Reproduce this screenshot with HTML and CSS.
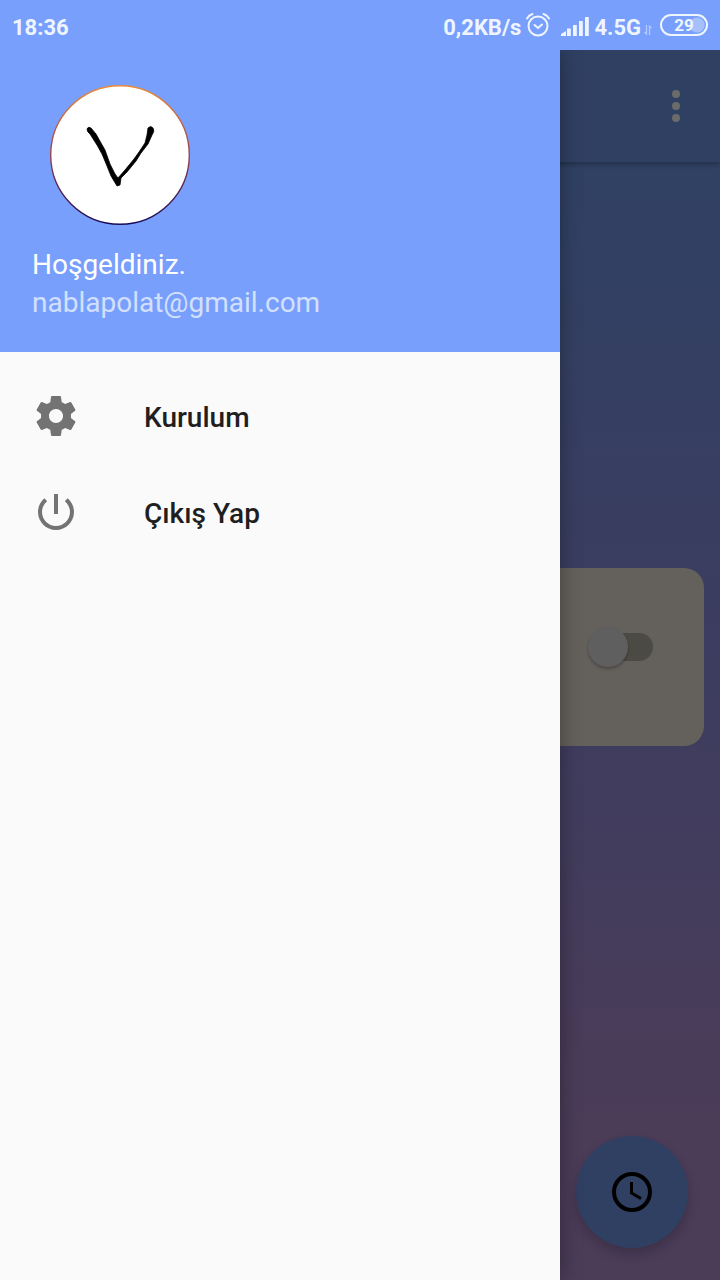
FILE: index.html
```html
<!DOCTYPE html>
<html lang="tr">
<head>
<meta charset="utf-8">
<meta name="viewport" content="width=device-width, initial-scale=1">
<title>Kurulum</title>
<link rel="stylesheet" href="styles.css">
</head>
<body>
<div class="status-bar">
  <span class="status-time">18:36</span>
  <div class="status-info">
    <span>0,2KB/s</span>
    <svg class="alarm" viewBox="0 0 26 26" width="26" height="26" fill="none" stroke="currentColor" stroke-width="2" stroke-linecap="round">
      <circle cx="13" cy="14" r="9.5"/>
      <path d="M9.5 13l3.5 3 4-3.500M2 6.500Q4 3 7.500 2M24 6.500Q22 3 18.500 2"/>
    </svg>
    <svg class="signal" viewBox="0 0 28 20" width="28" height="20" fill="currentColor">
      <path d="M0 20v-2l5-3v5zM6 12.500h3.800V20H6zM12 9h3.800v11H12zM18 5h3.800v15H18zM24 1h3.800v19H24z"/>
    </svg>
    <span class="network">4.5G</span>
    <svg class="traffic" viewBox="0 0 8 10" width="8" height="10" fill="none" stroke="currentColor" stroke-width="1.300">
      <path d="M2.500 0v9L.5 7M5.500 10V1l2 2"/>
    </svg>
    <span class="battery">29</span>
  </div>
</div>

<div class="screen">
  <header class="toolbar">
    <button class="more" type="button" aria-label="Diğer seçenekler">
      <svg viewBox="0 0 48 48" width="48" height="48" fill="currentColor"><circle cx="24" cy="12" r="4"/><circle cx="24" cy="24" r="4"/><circle cx="24" cy="36" r="4"/></svg>
    </button>
  </header>
  <main class="content">
    <section class="card">
      <input class="switch" type="checkbox" role="switch" aria-label="Aç / kapat">
    </section>
  </main>
  <button class="fab" type="button" aria-label="Zamanlayıcı">
    <svg viewBox="0 0 24 24" width="48" height="48" fill="none" stroke="currentColor">
      <circle cx="12" cy="12" r="9" stroke-width="2"/><path d="M11.750 7v5.500l4.750 2.800" stroke-width="1.500"/>
    </svg>
  </button>

  <aside class="drawer">
    <div class="profile">
      <svg class="avatar" viewBox="0 0 140 140" width="140" height="140">
        <defs><linearGradient id="ring" x1="0" y1="0" x2="0" y2="1"><stop offset="0" stop-color="#f08a32"/><stop offset=".5" stop-color="#964350"/><stop offset="1" stop-color="#180a55"/></linearGradient></defs>
        <circle cx="70" cy="70" r="69.300" fill="#fff" stroke="url(#ring)" stroke-width="1.400"/>
        <path d="M37 44Q38 41 41 43L46 49L51 58L55 65L60 79L65 89L68 93L75 85L84 74L89 67L95 58L97 50L98 43Q101 40 103 43Q105 46 102 50L98 59L91 68L86 76L77 87L71 93L70 100L67 101L61 91L57 81L52 69L47 60L40 49Q37 47 37 44z" fill="#000" stroke="#000" stroke-width=".8" stroke-linejoin="round"/>
      </svg>
      <div class="greeting">Hoşgeldiniz.</div>
      <div class="email">nablapolat@gmail.com</div>
    </div>
    <nav class="menu">
      <a class="menu-item" href="#kurulum">
        <svg viewBox="0 0 24 24" width="48" height="48" fill="currentColor"><path d="M19.430 12.980c.04-.32.070-.64.070-.98s-.03-.66-.07-.98l2.110-1.650c.19-.15.240-.42.120-.64l-2-3.460c-.12-.22-.39-.3-.61-.22l-2.490 1c-.52-.4-1.080-.73-1.690-.98l-.38-2.650C14.460 2.180 14.250 2 14 2h-4c-.25 0-.46.180-.49.420l-.38 2.650c-.61.250-1.170.590-1.690.980l-2.490-1c-.23-.09-.49 0-.61.220l-2 3.460c-.13.220-.07.490.120.640l2.110 1.650c-.04.320-.07.650-.07.980s.03.660.070.980l-2.110 1.650c-.19.150-.24.420-.12.640l2 3.460c.12.220.390.300.610.220l2.490-1c.52.400 1.080.730 1.690.980l.38 2.650c.03.240.240.420.490.420h4c.25 0 .46-.18.490-.42l.38-2.650c.61-.25 1.170-.59 1.690-.98l2.490 1c.23.090.490 0 .61-.22l2-3.460c.12-.22.070-.49-.12-.64l-2.110-1.650zM12 15.500c-1.930 0-3.500-1.570-3.500-3.500s1.570-3.500 3.500-3.500 3.500 1.570 3.500 3.500-1.570 3.500-3.500 3.500z"/></svg>
        <span>Kurulum</span>
      </a>
      <a class="menu-item" href="#cikis">
        <svg viewBox="0 0 24 24" width="48" height="48" fill="currentColor"><path d="M13 3h-2v10h2V3zm4.830 2.170l-1.420 1.420C17.990 7.860 19 9.810 19 12c0 3.870-3.130 7-7 7s-7-3.130-7-7c0-2.190 1.010-4.140 2.580-5.420L6.170 5.170C4.230 6.820 3 9.260 3 12c0 4.970 4.030 9 9 9s9-4.030 9-9c0-2.740-1.230-5.180-3.170-6.830z"/></svg>
        <span>Çıkış Yap</span>
      </a>
    </nav>
  </aside>
</div>
</body>
</html>
```
FILE: styles.css
```css
* { box-sizing: border-box; }

body {
  margin: 0;
  min-height: 100vh;
  display: flex;
  flex-direction: column;
  font-family: Roboto, "Noto Sans", sans-serif;
  font-size: 28px;
}

button { border: 0; padding: 0; cursor: pointer; }
svg { display: block; flex: none; }

.status-bar {
  height: 50px;
  padding: 4px 12px 0;
  display: flex;
  align-items: center;
  justify-content: space-between;
  background: #789ffc;
  color: #eef5ff;
  font-size: 22px;
  font-weight: 700;
}
.status-info { display: flex; align-items: center; }
.alarm { margin: 0 10px 4px 4px; }
.signal { margin: 0 5px 3px 0; }
.traffic { margin: 6px 8px 0 3px; opacity: .5; }
.battery {
  width: 48px;
  height: 22px;
  margin-bottom: 4px;
  border: 2px solid currentColor;
  border-radius: 11px;
  background: radial-gradient(circle at 35px 9px, #a5c0fd 7px, transparent 8px);
  font-size: 17px;
  line-height: 18px;
  text-align: center;
}

.screen {
  flex: 1;
  position: relative;
  display: flex;
  flex-direction: column;
  overflow: hidden;
  background: linear-gradient(#304164 10%, #3c3d60 48%, #4b3c58 88%);
}

.toolbar {
  height: 112px;
  padding: 0 20px;
  display: flex;
  align-items: center;
  justify-content: flex-end;
  background: #304063;
  box-shadow: 0 2px 5px rgba(0, 0, 0, .3);
}
.more { background: none; color: #6b6b6b; }

.content {
  flex: 1;
  padding: 0 16px 128px;
  display: flex;
  flex-direction: column;
  justify-content: center;
}
.card {
  height: 178px;
  padding: 0 51px 20px;
  display: flex;
  align-items: center;
  justify-content: flex-end;
  border-radius: 20px;
  background: #64605b;
}

.switch {
  appearance: none;
  position: relative;
  width: 60px;
  height: 28px;
  margin: 0;
  border-radius: 14px;
  background: #4c4a45;
}
.switch::before {
  content: "";
  position: absolute;
  left: -5px;
  top: -6px;
  width: 40px;
  height: 40px;
  border-radius: 50%;
  background: #5f5f60;
  box-shadow: 0 2px 3px rgba(0, 0, 0, .25);
}
.switch:checked::before { left: 25px; }

.fab {
  position: absolute;
  right: 32px;
  bottom: 32px;
  width: 112px;
  height: 112px;
  display: grid;
  place-items: center;
  border-radius: 50%;
  background: #304063;
  color: #000;
  box-shadow: 0 6px 12px rgba(0, 0, 0, .2);
}

.drawer {
  position: absolute;
  inset: 0 auto 0 0;
  width: calc(100% - 160px);
  max-width: 560px;
  background: #fafafa;
  box-shadow: 0 0 20px rgba(0, 0, 0, .35);
}
.profile {
  padding: 35px 32px 30px;
  background: #789ffc;
  color: #fff;
  line-height: 38px;
}
.avatar { margin: 0 18px 21px; }
.email { color: #d3e0fc; }

.menu { padding-top: 16px; }
.menu-item {
  height: 96px;
  padding: 0 32px;
  display: flex;
  align-items: center;
  gap: 64px;
  color: #1f1f1f;
  font-weight: 500;
  text-decoration: none;
}
.menu-item span { padding-top: 2px; }
.menu-item svg { color: #737373; }
```
